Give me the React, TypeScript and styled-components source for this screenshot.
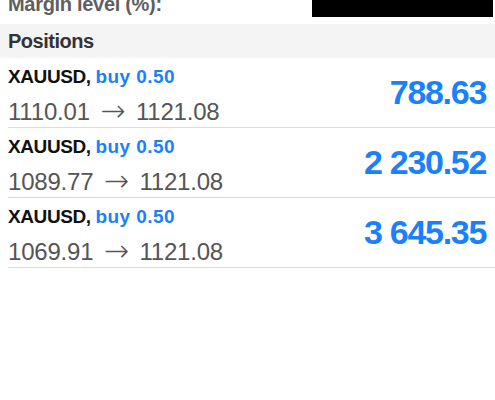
import React from "react";
import styled, { createGlobalStyle } from "styled-components";

const GlobalStyle = createGlobalStyle`
  html, body {
    margin: 0;
    padding: 0;
    background: #ffffff;
  }
  body {
    font-family: "Liberation Sans", Arial, Helvetica, sans-serif;
  }
`;

const Screen = styled.div`
  display: flex;
  flex-direction: column;
  width: 495px;
  height: 400px;
  background: #ffffff;
  overflow: hidden;
`;

const SummaryRow = styled.div`
  display: flex;
  justify-content: space-between;
  align-items: flex-start;
  height: 24px;
  padding: 0 2px 0 8px;
  overflow: hidden;
`;

const SummaryLabel = styled.span`
  margin-top: -6px;
  font-size: 20px;
  line-height: 20px;
  font-weight: 700;
  letter-spacing: -0.3px;
  color: #5f5f5f;
`;

const HiddenValue = styled.div`
  width: 181px;
  height: 17px;
  background: #000000;
`;

const SectionHeader = styled.div`
  display: flex;
  align-items: center;
  height: 34px;
  padding-left: 8px;
  background: #f4f4f4;
  font-size: 20px;
  font-weight: 700;
  letter-spacing: -0.5px;
  color: #333333;
`;

const PositionRow = styled.div`
  display: flex;
  justify-content: space-between;
  align-items: center;
  height: 69px;
  margin-left: 8px;
  padding-right: 9px;
  border-bottom: 1px solid #dcdcdc;
`;

const Info = styled.div`
  display: flex;
  flex-direction: column;
  align-self: flex-start;
  padding-top: 8px;
`;

const Title = styled.div`
  font-size: 19px;
  line-height: 22px;
  font-weight: 700;
  letter-spacing: -0.4px;
  color: #111111;
`;

const Side = styled.span`
  letter-spacing: 0.4px;
  color: #1a80fb;
`;

const Prices = styled.div`
  margin-top: 8px;
  font-size: 24px;
  line-height: 28px;
  letter-spacing: -0.2px;
  color: #555555;
`;

const Arrow = styled.span`
  margin: 0 4px;
  font-family: "DejaVu Sans", sans-serif;
  font-weight: 200;
  font-size: 30px;
  line-height: 1;
  vertical-align: -1px;
  letter-spacing: 0;
`;

const Profit = styled.div`
  font-size: 34px;
  font-weight: 700;
  letter-spacing: -1.3px;
  color: #1a80fb;
`;

type Position = {
  symbol: string;
  side: string;
  volume: string;
  open: string;
  current: string;
  profit: string;
};

const positions: Position[] = [
  { symbol: "XAUUSD", side: "buy", volume: "0.50", open: "1110.01", current: "1121.08", profit: "788.63" },
  { symbol: "XAUUSD", side: "buy", volume: "0.50", open: "1089.77", current: "1121.08", profit: "2 230.52" },
  { symbol: "XAUUSD", side: "buy", volume: "0.50", open: "1069.91", current: "1121.08", profit: "3 645.35" },
];

export default function App() {
  return (
    <>
      <GlobalStyle />
      <Screen>
        <SummaryRow>
          <SummaryLabel>Margin level (%):</SummaryLabel>
          <HiddenValue />
        </SummaryRow>
        <SectionHeader>Positions</SectionHeader>
        {positions.map((p, i) => (
          <PositionRow key={i}>
            <Info>
              <Title>
                {p.symbol}, <Side>{p.side} {p.volume}</Side>
              </Title>
              <Prices>
                {p.open} <Arrow>→</Arrow> {p.current}
              </Prices>
            </Info>
            <Profit>{p.profit}</Profit>
          </PositionRow>
        ))}
      </Screen>
    </>
  );
}
